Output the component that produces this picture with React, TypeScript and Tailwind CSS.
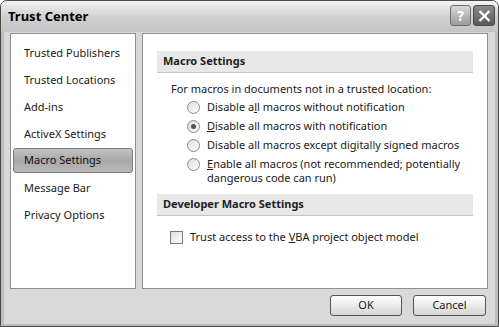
import React from 'react';

const sideItems = [
  'Trusted Publishers',
  'Trusted Locations',
  'Add-ins',
  'ActiveX Settings',
  'Macro Settings',
  'Message Bar',
  'Privacy Options',
];

function Radio({ checked }: { checked?: boolean }) {
  return (
    <span className="flex h-[13px] w-[13px] flex-shrink-0 items-center justify-center rounded-full border border-[#8a8a8a] bg-gradient-to-br from-[#dedede] to-white">
      {checked && <span className="h-[5px] w-[5px] rounded-full bg-[#555]" />}
    </span>
  );
}

function SectionBar({ title }: { title: string }) {
  return (
    <div className="flex h-[22px] items-center border-b border-[#c4c4c4] bg-[#e8e8e8] pl-[6px] text-[11px] font-bold text-[#222]">
      {title}
    </div>
  );
}

export default function App() {
  const options: React.ReactNode[] = [
    <>Disable a<u>l</u>l macros without notification</>,
    <><u>D</u>isable all macros with notification</>,
    <>Disable all macros except di<u>g</u>itally signed macros</>,
    <><u>E</u>nable all macros (not recommended; potentially<br />dangerous code can run)</>,
  ];

  return (
    <div
      className="relative h-[327px] w-[499px] overflow-hidden rounded-t-[7px] border border-[#4a4a4a] bg-[#d9d9d9] text-[#1a1a1a]"
      style={{ fontFamily: '"Noto Sans", "Open Sans", sans-serif' }}
    >
      {/* title bar */}
      <div className="flex h-[31px] items-center justify-between bg-gradient-to-b from-[#f4f4f4] via-[#d0d0d0] to-[#c4c4c4] pl-[7px] pr-[3px]">
        <span className="text-[13px] font-bold text-black">Trust Center</span>
        <div className="flex gap-[2px] pb-[2px]">
          <div className="flex h-[21px] w-[21px] items-center justify-center rounded-[3px] border border-[#6d6d6d] bg-gradient-to-b from-[#d8d8d8] to-[#9a9a9a] text-[14px] font-bold leading-none text-white">
            ?
          </div>
          <div className="flex h-[21px] w-[22px] items-center justify-center rounded-[3px] border border-[#4a4a4a] bg-gradient-to-b from-[#8c8c8c] to-[#5a5a5a]">
            <svg width="13" height="12" viewBox="0 0 13 12">
              <path d="M1.5 1 L11.5 11 M11.5 1 L1.5 11" stroke="#fff" strokeWidth="2.4" />
            </svg>
          </div>
        </div>
      </div>

      {/* body */}
      <div className="flex h-[295px] flex-col border-x-[3px] border-b-[3px] border-[#bdbdbd] pb-[2px]">
        <div className="flex h-[257px] gap-[6px] pl-[6px] pr-[7px] pt-px">
          {/* sidebar */}
          <div className="w-[126px] border border-[#8f8f8f] bg-white pt-[6px] text-[11px]">
            {sideItems.map((item) =>
              item === 'Macro Settings' ? (
                <div key={item} className="h-[27px] px-[2px]">
                  <div className="flex h-[25px] items-center rounded-[3px] border border-[#7a7a7a] bg-gradient-to-b from-[#c4c4c4] via-[#a8a8a8] to-[#b8b8b8] pl-[10px] text-[#111]">
                    {item}
                  </div>
                </div>
              ) : (
                <div key={item} className="flex h-[27px] items-center pl-[13px]">
                  {item}
                </div>
              )
            )}
          </div>

          {/* main */}
          <div className="flex-1 border border-[#8f8f8f] bg-white pl-[14px] pr-[14px] pt-[17px] text-[11px]">
            <SectionBar title="Macro Settings" />
            <div className="pl-[14px] pt-[8px]">
              <div className="h-[18px]">For macros in documents not in a trusted location:</div>
              <div className="flex flex-col pl-[16px]">
                {options.map((o, i) => (
                  <div key={i} className="flex min-h-[19px] items-start gap-[7px] pt-[1px] leading-[14px]">
                    <span className="pt-[1px]">
                      <Radio checked={i === 1} />
                    </span>
                    <span>{o}</span>
                  </div>
                ))}
              </div>
            </div>
            <div className="pt-[9px]">
              <SectionBar title="Developer Macro Settings" />
            </div>
            <div className="flex items-center gap-[7px] pl-[13px] pt-[13px]">
              <span className="h-[13px] w-[13px] border border-[#7a7a7a] bg-gradient-to-br from-[#dedede] to-white" />
              <span>
                Trust access to the <u>V</u>BA project object model
              </span>
            </div>
          </div>
        </div>

        {/* buttons */}
        <div className="flex flex-1 items-center justify-end gap-[11px] pr-[9px]">
          <button className="h-[21px] w-[72px] rounded-[3px] border border-[#555] bg-gradient-to-b from-white via-[#ececec] to-[#d2d2d2] text-[11px]">
            OK
          </button>
          <button className="h-[21px] w-[73px] rounded-[3px] border border-[#555] bg-gradient-to-b from-white via-[#ececec] to-[#d2d2d2] text-[11px]">
            Cancel
          </button>
        </div>
      </div>
    </div>
  );
}
